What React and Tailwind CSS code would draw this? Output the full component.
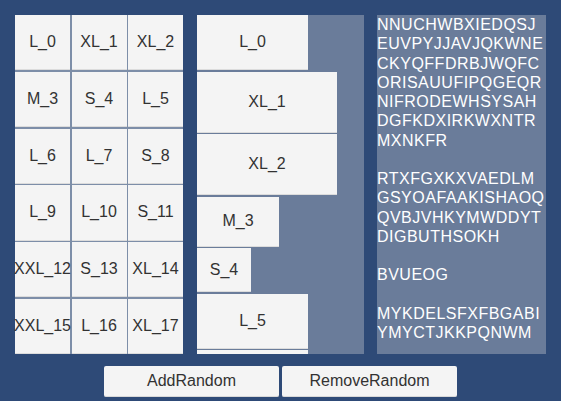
const labels = [
  "L_0", "XL_1", "XL_2", "M_3", "S_4", "L_5", "L_6", "L_7", "S_8",
  "L_9", "L_10", "S_11", "XXL_12", "S_13", "XL_14", "XXL_15", "L_16", "XL_17",
];

const listItems = [
  { label: "L_0", size: "w-[111px] h-[55px]" },
  { label: "XL_1", size: "w-[140px] h-[61px]" },
  { label: "XL_2", size: "w-[140px] h-[61px]" },
  { label: "M_3", size: "w-[82px] h-[50px]" },
  { label: "S_4", size: "w-[54px] h-[44px]" },
  { label: "L_5", size: "w-[111px] h-[55px]" },
  { label: "L_6", size: "w-[111px] h-[55px]" },
];

const paragraphs = [
  ["NNUCHWBXIEDQSJ", "EUVPYJJAVJQKWNE", "CKYQFFDRBJWQFC", "ORISAUUFIPQGEQR", "NIFRODEWHSYSAH", "DGFKDXIRKWXNTR", "MXNKFR"],
  ["RTXFGXKXVAEDLM", "GSYOAFAAKISHAOQ", "QVBJVHKYMWDDYT", "DIGBUTHSOKH"],
  ["BVUEOG"],
  ["MYKDELSFXFBGABI", "YMYCTJKKPQNWM"],
];

function Tile({ label, className }) {
  return (
    <div
      className={`flex items-center justify-center whitespace-nowrap bg-[#f4f4f4] border-b border-[#dcdcdc] text-[16px] text-[#323232] ${className}`}
    >
      {label}
    </div>
  );
}

export default function App() {
  return (
    <div
      className="w-[561px] h-[401px] bg-[#2e4a77] overflow-hidden flex flex-col"
      style={{ fontFamily: '"Liberation Sans", Arial, sans-serif' }}
    >
      <div className="flex pt-[15px] pl-[15px] h-[354px]">
        <div className="grid grid-cols-3 grid-rows-6 gap-[1.5px] w-[168px] h-[339px] bg-[#7d8ea8]">
          {labels.map((l) => (
            <Tile key={l} label={l} />
          ))}
        </div>

        <div className="ml-[14px] w-[167px] h-[339px] bg-[#6a7c9a] overflow-hidden flex flex-col gap-[1.5px]">
          {listItems.map((it) => (
            <Tile key={it.label} label={it.label} className={`shrink-0 ${it.size}`} />
          ))}
        </div>

        <div className="ml-[13px] w-[169px] h-[339px] bg-[#6a7c9a] text-white text-[16px] leading-[19.25px] tracking-[0.5px] whitespace-nowrap overflow-hidden">
          {paragraphs.map((p, i) => (
            <div key={i} className={i > 0 ? "mt-[19.25px]" : ""}>
              {p.map((line) => (
                <div key={line}>{line}</div>
              ))}
            </div>
          ))}
        </div>
      </div>

      <div className="flex justify-center gap-[3px] mt-[12px]">
        <button className="w-[175px] h-[31px] bg-[#f4f4f4] border-b border-[#d8d8d8] rounded-[2px] text-[16px] text-[#323232]">
          AddRandom
        </button>
        <button className="w-[175px] h-[31px] bg-[#f4f4f4] border-b border-[#d8d8d8] rounded-[2px] text-[16px] text-[#323232]">
          RemoveRandom
        </button>
      </div>
    </div>
  );
}
